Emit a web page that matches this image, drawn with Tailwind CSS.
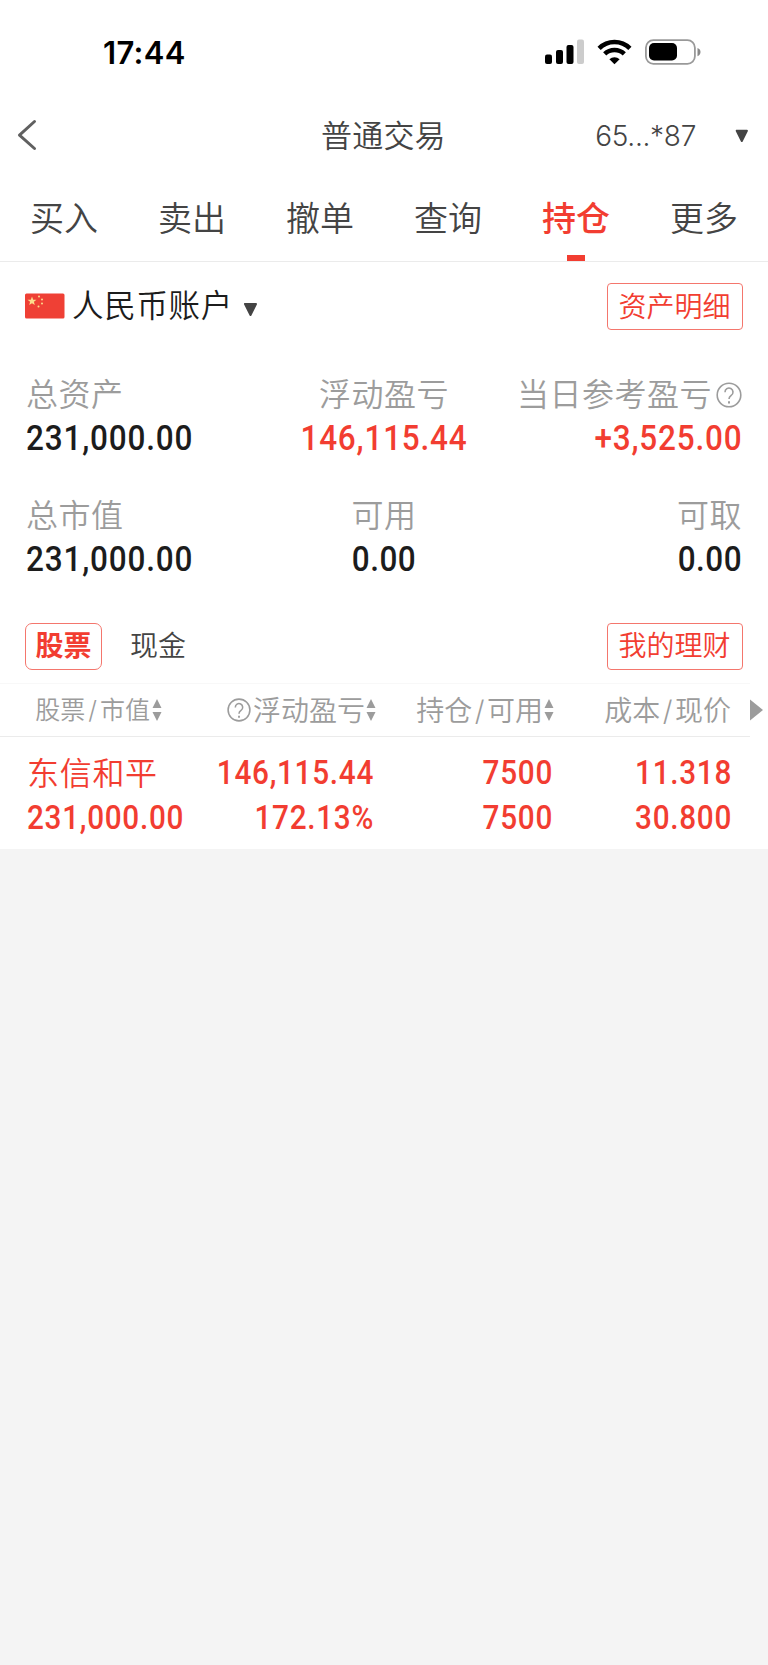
<!DOCTYPE html>
<html lang="zh-CN">
<head>
<meta charset="utf-8">
<title>普通交易</title>
<script src="https://cdn.jsdelivr.net/npm/@tailwindcss/browser@4"></script>
</head>
<body class="w-[768px] h-[1665px] overflow-hidden bg-[#f4f4f4] font-['Inter','Noto_Sans_CJK_SC',sans-serif] font-[350] text-[#444] leading-none whitespace-nowrap">
<div class="bg-white h-[849px]">
  <!-- status bar -->
  <div class="h-[104px] flex items-center pl-[103px] pr-[67px] justify-between text-black">
    <span class="text-[31px] font-semibold tracking-[0.3px]">17:44</span>
    <div class="flex items-center">
      <svg class="w-[40px] h-[26px]" viewBox="0 0 40 26"><rect x="1" y="15.500" width="7" height="9.500" rx="2"/><rect x="12" y="11" width="7" height="14" rx="2"/><rect x="22.500" y="6" width="7" height="19" rx="2"/><rect x="33" y="0.500" width="7" height="24.500" rx="2" fill="#ccc"/></svg>
      <svg class="w-[35px] h-[26px] ml-[13px]" viewBox="0 0 35 26" fill="none" stroke="#000" stroke-width="4.600"><path d="M2.100 9.300a22 22 0 0 1 30.800 0"/><path d="M7.700 14.900a14.200 14.200 0 0 1 19.600 0"/><path d="M17.500 25.300l-5.100-5.100a7.600 7.600 0 0 1 10.200 0z" fill="#000" stroke="none"/></svg>
      <svg class="w-[57px] h-[26px] ml-[12px]" viewBox="0 0 57 26"><rect x="1.900" y="1.200" width="49" height="23.600" rx="7.500" fill="none" stroke="#999" stroke-width="1.800"/><rect x="5" y="4" width="28" height="17.500" rx="5" fill="#000"/><path d="M53.500 9c4 1.200 4 7 0 8.200z" fill="#888"/></svg>
    </div>
  </div>
  <!-- title bar -->
  <div class="h-[63px] grid grid-cols-[321px_125px_1fr] items-center">
    <svg class="w-[20px] h-[32px] ml-[17px] -mt-px" viewBox="0 0 20 32" fill="none" stroke="#606060" stroke-width="3" stroke-linecap="round" stroke-linejoin="round"><path d="M17.500 2.500L2.500 16.200L17.500 29.500"/></svg>
    <span class="text-[31px] tracking-[0.2px]">普通交易</span>
    <div class="flex items-center justify-end pr-[19px]">
      <span class="text-[28px] tracking-[-0.3px] mr-[39px]">65...*87</span>
      <svg class="w-[14px] h-[14px]" viewBox="0 0 14 14"><path d="M1.700 1.700h10.200L6.800 12z" fill="#444" stroke="#444" stroke-width="2" stroke-linejoin="round"/></svg>
    </div>
  </div>
  <!-- tabs -->
  <div class="h-[95px] border-b border-[#ebebeb] grid grid-cols-6 grid-rows-[94px] text-[34px] text-center leading-[104px]">
    <span>买入</span><span>卖出</span><span>撤单</span><span>查询</span>
    <span class="relative text-[#f23d31] font-medium">持仓<i class="absolute left-[55px] bottom-0 w-[18px] h-[6px] bg-[#f23d31]"></i></span>
    <span>更多</span>
  </div>
  <!-- account -->
  <div class="h-[90px] flex items-center pl-[25px] pr-[25px] pb-px">
    <svg class="w-[40px] h-[26px] -mt-[2px]" viewBox="0 0 40 26"><rect y="0.500" width="39.500" height="25" rx="1.500" fill="#ef4035"/><g fill="#fcdc8c"><path d="M7 3.500l1.200 3.200h3.300l-2.600 2.100.9 3.300L7 10.200l-2.800 1.900.9-3.300-2.600-2.100h3.300z"/><circle cx="14" cy="3.500" r="1"/><circle cx="17" cy="6.500" r="1"/><circle cx="17" cy="10.500" r="1"/><circle cx="13.500" cy="13.500" r="1"/></g></svg>
    <span class="text-[31.5px] tracking-[0.7px] text-[#1c1c1c] ml-[7px] -mt-[2px]">人民币账户</span>
    <svg class="w-[15px] h-[15px] ml-[10px] mt-[6px]" viewBox="0 0 15 15"><path d="M2 2h11L7.500 13z" fill="#444" stroke="#444" stroke-width="2" stroke-linejoin="round"/></svg>
    <div class="ml-auto w-[136px] h-[47px] border border-[#f4766d] rounded-[4px] text-[#f23d31] text-[28px] text-center leading-[46px] pr-px">资产明细</div>
  </div>
  <!-- totals -->
  <div class="h-[243px] pl-[26px] pr-[26px] pt-[27px] grid grid-rows-[121px_121px] grid-cols-[229px_258px_229px] text-[#9c9c9c] text-[32px] tracking-[0.5px]">
    <div><div class="h-[32px] leading-[32px]">总资产</div><div class="font-['Roboto'] font-medium text-[35px] tracking-[0.9px] leading-[35px] mt-[10px] text-[#1c1c1c] origin-left scale-x-90">231,000.00</div></div>
    <div class="text-center"><div class="h-[32px] leading-[32px]">浮动盈亏</div><div class="font-['Roboto'] font-medium text-[35px] tracking-[0.9px] leading-[35px] mt-[10px] text-[#f23d31] scale-x-90">146,115.44</div></div>
    <div class="flex flex-col items-end"><div class="h-[32px] leading-[32px] flex items-center"><span>当日参考盈亏</span><svg class="w-[26px] h-[26px] ml-[4px]" viewBox="0 0 26 26" fill="none" stroke="#9c9c9c" stroke-width="1.600"><circle cx="13" cy="13" r="11.800"/><path d="M9 10.200a4 4 0 1 1 6.200 3.200c-1.500 1.100-2.200 1.700-2.200 3.600"/><path d="M13 19.200v2.200" stroke-width="2"/></svg></div><div class="font-['Roboto'] font-medium text-[35px] tracking-[0.9px] leading-[35px] mt-[10px] text-[#f23d31] origin-right scale-x-90">+3,525.00</div></div>
    <div><div class="h-[32px] leading-[32px]">总市值</div><div class="font-['Roboto'] font-medium text-[35px] tracking-[0.9px] leading-[35px] mt-[10px] text-[#1c1c1c] origin-left scale-x-90">231,000.00</div></div>
    <div class="text-center"><div class="h-[32px] leading-[32px]">可用</div><div class="font-['Roboto'] font-medium text-[35px] tracking-[0.5px] leading-[35px] mt-[10px] text-[#1c1c1c] scale-x-90">0.00</div></div>
    <div class="text-right"><div class="h-[32px] leading-[32px]">可取</div><div class="font-['Roboto'] font-medium text-[35px] tracking-[0.5px] leading-[35px] mt-[10px] text-[#1c1c1c] origin-right scale-x-90">0.00</div></div>
  </div>
  <!-- holdings switch -->
  <div class="h-[88px] pt-[28px] pl-[25px] pr-[25px] flex text-[28px] text-center leading-[45px]">
    <div class="w-[77px] h-[47px] border border-[#f4766d] rounded-[7px] text-[#f23d31] font-bold">股票</div>
    <div class="ml-[28px] pt-px">现金</div>
    <div class="ml-auto w-[136px] h-[47px] border border-[#f4766d] rounded-[4px] text-[#f23d31] pr-px">我的理财</div>
  </div>
  <!-- table header -->
  <div class="h-[54px] flex">
    <div class="w-[750px] shrink-0 border-t border-b border-t-[#f8f8f8] border-b-[#ebebeb] grid grid-cols-[162px_214px_178px_177px] text-[#9c9c9c] text-[28px]">
      <div class="flex items-center justify-end gap-[2px]"><span class="text-[25px] mt-px">股票<span class="mx-[3px]">/</span>市值</span><svg class="w-[10px] h-[24px]" viewBox="0 0 10 24" fill="#9c9c9c"><path d="M5 1l4.500 9h-9zM5 23l4.500-9h-9z"/></svg></div>
      <div class="flex items-center justify-end"><svg class="w-[24px] h-[24px] mr-[2px]" viewBox="0 0 26 26" fill="none" stroke="#9c9c9c" stroke-width="1.700"><circle cx="13" cy="13" r="11.800"/><path d="M9 10.200a4 4 0 1 1 6.200 3.200c-1.500 1.100-2.200 1.700-2.200 3.600"/><path d="M13 19.200v2.200" stroke-width="2"/></svg><span class="mt-[2px]">浮动盈亏</span><svg class="w-[10px] h-[24px] ml-px" viewBox="0 0 10 24" fill="#9c9c9c"><path d="M5 1l4.500 9h-9zM5 23l4.500-9h-9z"/></svg></div>
      <div class="flex items-center justify-end gap-px"><span class="mt-[2px]">持仓<span class="mx-[2.5px]">/</span>可用</span><svg class="w-[10px] h-[24px]" viewBox="0 0 10 24" fill="#9c9c9c"><path d="M5 1l4.500 9h-9zM5 23l4.500-9h-9z"/></svg></div>
      <div class="flex items-center justify-end"><span class="mt-[2px]">成本<span class="mx-[2.5px]">/</span>现价</span></div>
    </div>
    <svg class="w-[14px] h-[22px] mt-[16px]" viewBox="0 0 14 22"><path d="M0 0.500L13 11L0 21.500z" fill="#9c9c9c"/></svg>
  </div>
  <!-- position -->
  <div class="h-[112px] pt-[17px] pl-[27px] grid grid-cols-[160px_187px_179px_179px] grid-rows-[45px_45px] text-[#f23d31] font-['Roboto'] font-medium text-[33px] tracking-[0.8px] text-right leading-[38px]">
    <span class="text-left text-[32px] tracking-[0.7px] leading-[35px] font-[350] font-['Noto_Sans_CJK_SC']">东信和平</span><span class="origin-right scale-x-90">146,115.44</span><span class="origin-right scale-x-90">7500</span><span class="origin-right scale-x-90">11.318</span>
    <span class="text-left origin-left scale-x-90">231,000.00</span><span class="origin-right scale-x-90">172.13%</span><span class="origin-right scale-x-90">7500</span><span class="origin-right scale-x-90">30.800</span>
  </div>
</div>
</body>
</html>
